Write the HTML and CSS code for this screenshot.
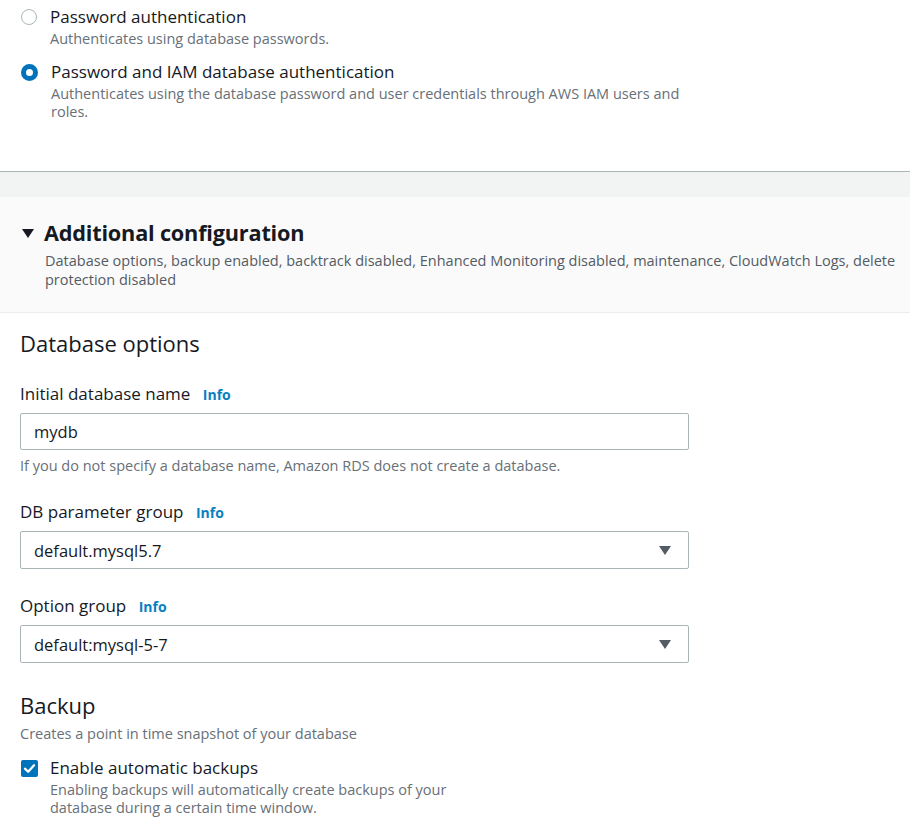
FILE: index.html
```html
<!DOCTYPE html>
<html>
<head>
<meta charset="utf-8">
<link rel="stylesheet" href="styles.css">
</head>
<body>
<div class="top">
  <div class="choice">
    <span class="radio"></span>
    <div class="choice-text">
      <div class="choice-label">Password authentication</div>
      <div class="choice-desc">Authenticates using database passwords.</div>
    </div>
  </div>
  <div class="choice">
    <span class="radio checked"></span>
    <div class="choice-text">
      <div class="choice-label">Password and IAM database authentication</div>
      <div class="choice-desc">Authenticates using the database password and user credentials through AWS IAM users and roles.</div>
    </div>
  </div>
</div>
<div class="gap"></div>
<div class="expander">
  <div class="exp-title"><span class="caret"></span>Additional configuration</div>
  <div class="exp-desc">Database options, backup enabled, backtrack disabled, Enhanced Monitoring disabled, maintenance, CloudWatch Logs, delete protection disabled</div>
</div>
<div class="content">
  <h2 class="section-title">Database options</h2>
  <div class="field">
    <div class="field-label">Initial database name <span class="info">Info</span></div>
    <div class="input">mydb</div>
    <div class="hint">If you do not specify a database name, Amazon RDS does not create a database.</div>
  </div>
  <div class="field">
    <div class="field-label">DB parameter group <span class="info">Info</span></div>
    <div class="input select">default.mysql5.7<span class="arrow"></span></div>
  </div>
  <div class="field">
    <div class="field-label">Option group <span class="info">Info</span></div>
    <div class="input select">default:mysql-5-7<span class="arrow"></span></div>
  </div>
  <h2 class="section-title backup">Backup</h2>
  <div class="section-desc">Creates a point in time snapshot of your database</div>
  <div class="choice check-row">
    <span class="checkbox"><svg viewBox="0 0 18 18" width="18" height="18"><path d="M4.2 9.2 L7.6 12.4 L13.8 5.6" fill="none" stroke="#fff" stroke-width="2.4" stroke-linecap="round" stroke-linejoin="round"/></svg></span>
    <div class="choice-text">
      <div class="choice-label">Enable automatic backups</div>
      <div class="choice-desc narrow">Enabling backups will automatically create backups of your database during a certain time window.</div>
    </div>
  </div>
</div>
</body>
</html>
```
FILE: styles.css
```css
html, body {
  margin: 0;
  padding: 0;
  background: #fff;
  color: #16191f;
  font-family: "Open Sans", "Noto Sans", sans-serif;
}
.top {
  padding: 4px 20px 0 21px;
  border-bottom: 1px solid #aab7b8;
  box-sizing: border-box;
  height: 172px;
}
.choice {
  display: flex;
  align-items: flex-start;
  gap: 13px;
  margin-bottom: 11px;
}
.radio {
  flex: none;
  width: 16px;
  height: 16px;
  border-radius: 50%;
  border: 1.5px solid #aab7b8;
  box-sizing: border-box;
  margin-top: 5px;
  background: #fff;
}
.radio.checked {
  border: 5px solid #0073bb;
  width: 17px;
  height: 17px;
}
.choice-label {
  font-size: 17px;
  line-height: 26px;
  color: #16191f;
}
.choice-desc {
  font-size: 14.5px;
  line-height: 18px;
  color: #687078;
  max-width: 640px;
}
.choice-desc.narrow { max-width: 420px; }
.gap {
  height: 25px;
  background: #f2f3f3;
}
.expander {
  background: #fafafa;
  border-bottom: 1px solid #eaeded;
  padding: 21px 10px 23px 22px;
}
.exp-title {
  display: flex;
  align-items: center;
  font-weight: 700;
  font-size: 21.7px;
  line-height: 30px;
  letter-spacing: -0.2px;
}
.caret {
  width: 0;
  height: 0;
  border-left: 6.5px solid transparent;
  border-right: 6.5px solid transparent;
  border-top: 9px solid #16191f;
  margin-right: 10px;
}
.exp-desc {
  padding-left: 23px;
  font-size: 14.5px;
  line-height: 19px;
  color: #545b64;
  margin-top: 3px;
}
.content {
  padding: 0 20px;
}
.section-title {
  margin: 0;
  font-weight: 400;
  font-size: 22px;
  line-height: 30px;
  padding-top: 15px;
}
.field {
  margin-top: 24px;
}
.field + .field { margin-top: 25px; }
.field-label {
  font-size: 17px;
  line-height: 24px;
  margin-bottom: 6px;
}
.info {
  color: #0a7fc0;
  font-weight: 700;
  font-size: 14px;
  margin-left: 8px;
}
.input {
  width: 669px;
  height: 37px;
  box-sizing: border-box;
  border: 1px solid #aab7b8;
  border-radius: 2px;
  padding: 0 13px;
  display: flex;
  align-items: center;
  justify-content: space-between;
  font-size: 16.5px;
}
.input.select { height: 38px; }
.arrow {
  width: 0;
  height: 0;
  border-left: 6px solid transparent;
  border-right: 6px solid transparent;
  border-top: 9px solid #545b64;
  margin-right: 4px;
}
.hint {
  font-size: 14.5px;
  line-height: 18px;
  color: #687078;
  margin-top: 7px;
}
.section-title.backup {
  padding-top: 0;
  margin-top: 27px;
}
.section-desc {
  font-size: 14.5px;
  line-height: 18px;
  color: #687078;
  margin-top: 5px;
  margin-bottom: 12px;
}
.check-row { gap: 12px; margin-left: 1px; }
.checkbox {
  flex: none;
  width: 17px;
  height: 17px;
  background: #0073bb;
  border-radius: 2px;
  margin-top: 5px;
  display: flex;
  align-items: center;
  justify-content: center;
}
.checkbox svg { display: block; width: 17px; height: 17px; }
```
